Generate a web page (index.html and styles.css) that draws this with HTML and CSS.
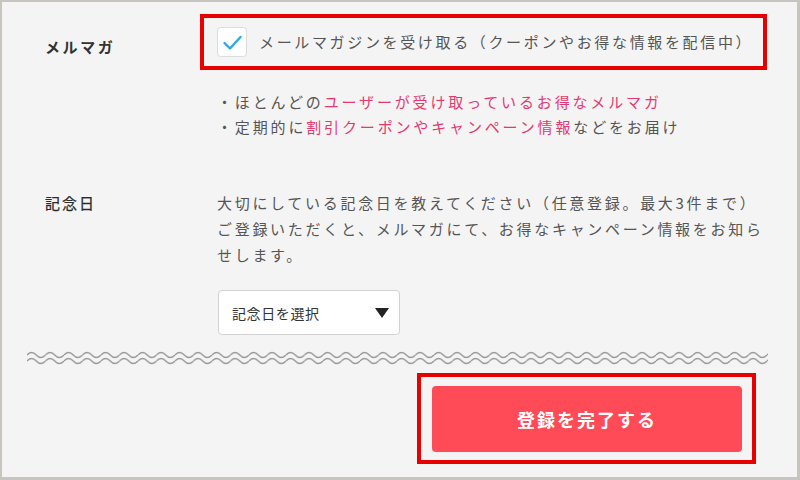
FILE: index.html
```html
<!DOCTYPE html>
<html lang="ja">
<head>
<meta charset="utf-8">
<link rel="stylesheet" href="styles.css">
</head>
<body>
<div class="frame">
  <div class="section">
    <div class="row row-mail">
      <div class="label label-bold">メルマガ</div>
      <div class="content">
        <div class="highlight check-row">
          <span class="checkbox">
            <svg width="30" height="30" viewBox="0 0 30 30"><path d="M7.5 16 L13 21.5 L23.5 10" fill="none" stroke="#2fa8e0" stroke-width="2.4" stroke-linecap="round" stroke-linejoin="round"/></svg>
          </span>
          <span class="check-text">メールマガジンを受け取る（クーポンやお得な情報を配信中）</span>
        </div>
        <ul class="bullets">
          <li>・ほとんどの<span class="pink">ユーザーが受け取っているお得なメルマガ</span></li>
          <li>・定期的に<span class="pink">割引クーポンやキャンペーン情報</span>などをお届け</li>
        </ul>
      </div>
    </div>
    <div class="row row-anniv">
      <div class="label label-mid">記念日</div>
      <div class="content">
        <p class="desc">大切にしている記念日を教えてください（任意登録。最大3件まで）ご登録いただくと、メルマガにて、お得なキャンペーン情報をお知らせします。</p>
        <div class="select">
          <span class="select-text">記念日を選択</span>
          <span class="arrow"></span>
        </div>
      </div>
    </div>
    <svg class="wave" width="741" height="16" viewBox="0 0 741 16">
      <defs>
        <pattern id="wv" width="18.5" height="16" patternUnits="userSpaceOnUse">
          <path d="M0 5 Q4.625 0 9.25 5 T18.5 5 M0 11 Q4.625 6 9.25 11 T18.5 11" fill="none" stroke="#9a9a9a" stroke-width="1.5"/>
        </pattern>
      </defs>
      <rect x="0" y="0" width="741" height="16" fill="url(#wv)"/>
    </svg>
    <div class="submit-row">
      <div class="highlight submit-box">
        <button class="submit">登録を完了する</button>
      </div>
    </div>
  </div>
</div>
</body>
</html>
```
FILE: styles.css
```css
* { box-sizing: border-box; }
html, body { margin: 0; padding: 0; }
body {
  font-family: "Noto Sans CJK JP", "Noto Sans", sans-serif;
  color: #555;
  background: #f4f4f4;
}
.frame {
  width: 800px;
  height: 480px;
  border-style: solid;
  border-color: #c8c4c0;
  border-width: 2px 3px 3px 2px;
  background: #f4f4f4;
  overflow: hidden;
}
.section {
  padding: 0 30px 0 25px;
}
.row {
  display: grid;
  grid-template-columns: 190px 1fr;
}
.row-mail { margin-top: 12px; }
.row-anniv { margin-top: 51px; }
.label {
  padding-left: 18px;
  font-size: 15px;
  line-height: 26px;
  letter-spacing: 2px;
  color: #333;
}
.label-bold {
  font-weight: bold;
  padding-top: 21px;
  line-height: 24px;
  letter-spacing: 2.6px;
}
.label-mid {
  color: #2a2a2a;
  -webkit-text-stroke: 0.25px #2a2a2a;
}
.content { min-width: 0; }
.highlight {
  border: 4px solid #e60000;
}
.check-row {
  margin-left: -17px;
  padding: 9px 13px;
  display: flex;
  align-items: center;
  gap: 12px;
}
.checkbox {
  width: 30px;
  height: 30px;
  flex: none;
  background: #fff;
  border: 1px solid #dcdcdc;
  border-radius: 4px;
  display: flex;
  align-items: center;
  justify-content: center;
}
.checkbox svg { display: block; flex: none; }
.check-text {
  font-size: 15px;
  letter-spacing: 2.65px;
  line-height: 24px;
  color: #555;
  white-space: nowrap;
}
.bullets {
  list-style: none;
  margin: 19px 0 0 0;
  padding: 0;
  font-size: 15px;
  line-height: 25px;
  letter-spacing: 2.85px;
  white-space: nowrap;
}
.pink { color: #e5386f; }
.desc {
  margin: 0;
  font-size: 15px;
  line-height: 26px;
  letter-spacing: 2.7px;
}
.select {
  margin-top: 22px;
  margin-left: 1px;
  width: 182px;
  height: 45px;
  background: #fff;
  border: 1px solid #d2d2d2;
  border-radius: 4px;
  display: flex;
  align-items: center;
  justify-content: space-between;
  padding: 0 10px 0 13px;
}
.select-text {
  font-size: 14px;
  letter-spacing: 0.6px;
  color: #333;
}
.arrow {
  width: 0;
  height: 0;
  border-left: 7px solid transparent;
  border-right: 7px solid transparent;
  border-top: 10px solid #222;
}
.wave {
  display: block;
  margin-top: 15px;
}
.submit-row {
  display: flex;
  justify-content: flex-end;
  margin-top: 7px;
  padding-right: 11px;
}
.submit-box {
  padding: 9px 10px 8px 11px;
}
.submit {
  display: block;
  width: 310px;
  height: 66px;
  border: none;
  border-radius: 4px;
  background: #ff4a57;
  color: #fff;
  font-family: "Noto Sans CJK JP", "Noto Sans", sans-serif;
  font-size: 18px;
  font-weight: bold;
  letter-spacing: 2px;
  padding: 0;
}
```
